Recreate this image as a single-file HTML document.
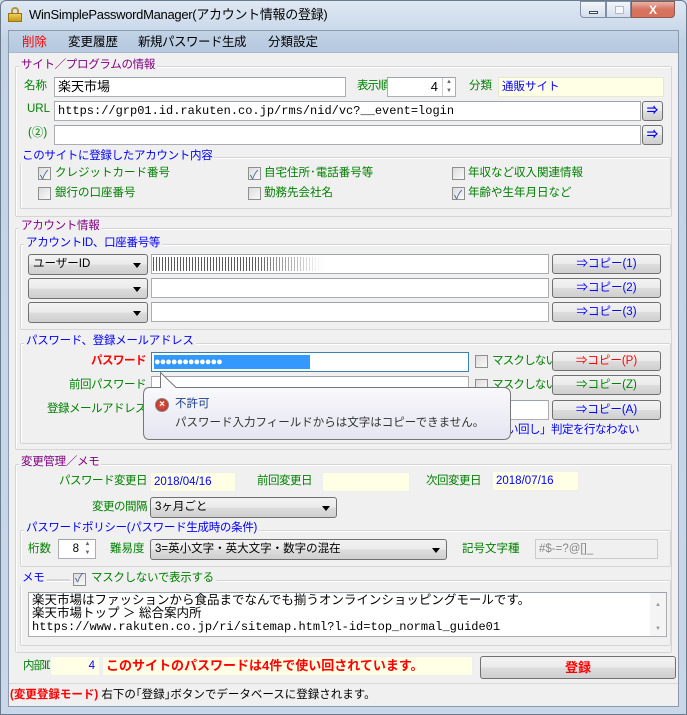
<!DOCTYPE html>
<html><head><meta charset="utf-8"><style>
*{box-sizing:border-box;margin:0;padding:0}
body{width:687px;height:715px;overflow:hidden;background:#cfdbe9;font-family:"Liberation Sans","Noto Sans CJK JP",sans-serif;font-size:11.5px;position:relative}
.a{position:absolute;white-space:nowrap;line-height:1}
.r{position:absolute;white-space:nowrap;line-height:1;right:541px;letter-spacing:-0.5px}
.frame{position:absolute;left:0;top:0;width:687px;height:715px;background:linear-gradient(#dfe8f3,#c3d3e6 40px,#c9d7e8);border:1px solid #6b7b8e;border-radius:6px 6px 0 0}
.client{position:absolute;left:8px;top:30px;width:671px;height:677px;background:#f0f0f0;border:1px solid #8a9bb0}
.menu{position:absolute;left:9px;top:31px;width:669px;height:22px;background:linear-gradient(#c3d3e6,#b5c8de);border-bottom:1px solid #a8b8cc}
.g{position:absolute;border:1px solid #d5d5d5;box-shadow:inset 1px 1px 0 #fff;border-radius:2px}
.gl{position:absolute;background:#f0f0f0;padding:0 2px;line-height:1;white-space:nowrap;letter-spacing:-0.3px}
.in{position:absolute;background:#fff;border:1px solid #abadb3;border-top-color:#9ea2ad;height:20px;line-height:18px;padding-left:3px;white-space:nowrap;overflow:hidden}
.y{background:#ffffe6}
.btn{position:absolute;border:1px solid #707070;border-radius:3px;background:linear-gradient(#f2f2f2 0,#ebebeb 50%,#dddddd 51%,#cfcfcf 100%);text-align:center;line-height:18px;height:20px;color:#0000ff}
.cmb{position:absolute;border:1px solid #707070;border-radius:3px;background:linear-gradient(#f2f2f2 0,#ebebeb 50%,#dddddd 51%,#cfcfcf 100%);height:21px;line-height:19px;padding-left:4px}
.cmb:after{content:"";position:absolute;right:6px;top:8px;border:4px solid transparent;border-top:5px solid #000;border-bottom:0}
.cb{position:absolute;width:13px;height:13px;border:1px solid #8f8f8f;background:linear-gradient(135deg,#dcdcdc,#fafafa)}
.ck:after{content:"✓";position:absolute;left:1px;top:-2px;font-size:12px;color:#4a5f97}
.gr{color:#008000}.bl{color:#0000ff}.pu{color:#800080}.rd{color:#ff0000}
</style></head><body>
<div class="frame"></div>
<div class="a" style="left:8px;top:7px;width:14px;height:15px"><div style="position:absolute;left:3px;top:0;width:8px;height:8px;border:2px solid #b8952c;border-bottom:0;border-radius:4px 4px 0 0"></div><div style="position:absolute;left:0;top:6px;width:14px;height:9px;background:linear-gradient(#f0cd57,#c99a1d);border:1px solid #9a7312"></div></div>
<div class="a" style="left:29px;top:8px;font-size:13px;color:#000;letter-spacing:-0.3px">WinSimplePasswordManager(アカウント情報の登録)</div>
<div class="a" style="left:580px;top:1px;width:26px;height:17px;border:1px solid #8090a4;border-radius:0 0 0 4px;background:linear-gradient(#f3f6fa,#d4deea)"><div style="position:absolute;left:8px;top:9px;width:9px;height:3px;background:#fff;border:1px solid #3a4a5e"></div></div>
<div class="a" style="left:606px;top:1px;width:25px;height:17px;border:1px solid #8090a4;background:linear-gradient(#f3f6fa,#d4deea)"><div style="position:absolute;left:8px;top:4px;width:9px;height:8px;border:1px solid #b0bac6;background:#f4f6fa"></div></div>
<div class="a" style="left:631px;top:1px;width:44px;height:17px;border:1px solid #8d5a52;border-radius:0 0 4px 0;background:linear-gradient(#eab3a8,#d5735f 50%,#d8705a)"><div style="position:absolute;left:0;width:42px;top:1px;text-align:center;color:#fff;font-weight:bold;font-size:12px;line-height:14px">X</div></div>
<div class="client"></div>
<div class="menu"></div>
<div class="a rd" style="left:22px;top:36px;font-size:12.5px">削除</div>
<div class="a" style="left:68px;top:36px;font-size:12.5px">変更履歴</div>
<div class="a" style="left:138px;top:36px;font-size:12.5px;letter-spacing:-0.5px">新規パスワード生成</div>
<div class="a" style="left:268px;top:36px;font-size:12.5px">分類設定</div>

<div class="g" style="left:15px;top:66px;width:657px;height:151px"></div>
<div class="gl pu" style="left:19px;top:60px">サイト／プログラムの情報</div>
<div class="a gr" style="left:24px;top:81px">名称</div>
<div class="in" style="left:54px;top:77px;width:292px;font-size:13px">楽天市場</div>
<div class="a gr" style="left:357px;top:81px;letter-spacing:-1px">表示順</div>
<div class="in" style="left:387px;top:77px;width:69px;text-align:right;padding-right:17px;font-size:13px">4</div>
<div class="a" style="left:442px;top:78px;width:13px;height:18px;border-left:1px solid #ccc;font-size:6px;color:#666;text-align:center;line-height:9px">▲<br>▼</div>
<div class="a gr" style="left:469px;top:81px">分類</div>
<div class="in y bl" style="left:498px;top:77px;width:166px;border-color:#e8e8d0">通販サイト</div>
<div class="a gr" style="left:27px;top:104px">URL</div>
<div class="in" style="left:54px;top:101px;width:587px;font-family:'Liberation Mono','Noto Sans CJK JP',monospace;font-size:12px">https://grp01.id.rakuten.co.jp/rms/nid/vc?__event=login</div>
<div class="btn" style="left:642px;top:101px;width:21px;font-weight:bold">⇒</div>
<div class="a gr" style="left:28px;top:128px">(②)</div>
<div class="in" style="left:54px;top:125px;width:587px"></div>
<div class="btn" style="left:642px;top:125px;width:21px;font-weight:bold">⇒</div>
<div class="g" style="left:20px;top:157px;width:651px;height:52px"></div>
<div class="gl bl" style="left:20px;top:151px">このサイトに登録したアカウント内容</div>
<div class="cb ck" style="left:38px;top:167px"></div><div class="a gr" style="left:55px;top:168px">クレジットカード番号</div>
<div class="cb ck" style="left:248px;top:167px"></div><div class="a gr" style="left:264px;top:168px">自宅住所･電話番号等</div>
<div class="cb" style="left:452px;top:167px"></div><div class="a gr" style="left:468px;top:168px">年収など収入関連情報</div>
<div class="cb" style="left:38px;top:187px"></div><div class="a gr" style="left:55px;top:188px">銀行の口座番号</div>
<div class="cb" style="left:248px;top:187px"></div><div class="a gr" style="left:264px;top:188px">勤務先会社名</div>
<div class="cb ck" style="left:452px;top:187px"></div><div class="a gr" style="left:468px;top:188px">年齢や生年月日など</div>

<div class="g" style="left:15px;top:228px;width:657px;height:222px"></div>
<div class="gl pu" style="left:19px;top:221px">アカウント情報</div>
<div class="g" style="left:20px;top:244px;width:651px;height:86px"></div>
<div class="gl bl" style="left:24px;top:238px">アカウントID、口座番号等</div>
<div class="cmb" style="left:28px;top:254px;width:120px">ユーザーID</div>
<div class="in" style="left:151px;top:254px;width:398px"><div style="position:absolute;left:1px;top:2px;width:170px;height:14px;background:repeating-linear-gradient(90deg,#222 0 1px,transparent 1px 3px),repeating-linear-gradient(0deg,#fff 0 1px,transparent 1px 2px);opacity:.75;-webkit-mask-image:linear-gradient(90deg,#000 60%,transparent)"></div></div>
<div class="btn" style="left:552px;top:254px;width:109px">⇒コピー(1)</div>
<div class="cmb" style="left:28px;top:278px;width:120px"></div>
<div class="in" style="left:151px;top:278px;width:398px"></div>
<div class="btn" style="left:552px;top:278px;width:109px">⇒コピー(2)</div>
<div class="cmb" style="left:28px;top:302px;width:120px"></div>
<div class="in" style="left:151px;top:302px;width:398px"></div>
<div class="btn" style="left:552px;top:302px;width:109px">⇒コピー(3)</div>
<div class="g" style="left:20px;top:343px;width:651px;height:101px"></div>
<div class="gl bl" style="left:24px;top:336px">パスワード、登録メールアドレス</div>
<div class="r rd" style="top:356px;font-weight:bold">パスワード</div>
<div class="in" style="left:151px;top:352px;width:318px;border-color:#3c7fb1"><div style="position:absolute;left:2px;top:2px;width:156px;height:14px;background:#3399ff;color:#fff;font-size:11px;letter-spacing:-1px;line-height:14px">●●●●●●●●●●●●</div></div>
<div class="cb" style="left:475px;top:355px"></div><div class="a gr" style="left:492px;top:356px;letter-spacing:-0.8px">マスクしない</div>
<div class="btn" style="left:552px;top:351px;width:109px;color:#ff0000">⇒コピー(P)</div>
<div class="r gr" style="top:380px">前回パスワード</div>
<div class="in" style="left:151px;top:376px;width:318px"></div>
<div class="cb" style="left:475px;top:379px"></div><div class="a gr" style="left:492px;top:380px;letter-spacing:-0.8px">マスクしない</div>
<div class="btn" style="left:552px;top:375px;width:109px;color:#008000">⇒コピー(Z)</div>
<div class="r gr" style="top:404px">登録メールアドレス</div>
<div class="in" style="left:151px;top:400px;width:398px"></div>
<div class="btn" style="left:552px;top:400px;width:109px">⇒コピー(A)</div>
<div class="a bl" style="left:496px;top:425px;letter-spacing:-0.5px">使い回し」判定を行なわない</div>
<svg class="a" style="left:140px;top:368px" width="376" height="76">
<defs><linearGradient id="tg" x1="0" y1="0" x2="0" y2="1"><stop offset="0" stop-color="#ffffff"/><stop offset="1" stop-color="#e4e5f0"/></linearGradient></defs>
<path d="M9.5,19.5 L20.5,19.5 L20.5,4.5 L36,19.5 L363.5,19.5 Q370.5,19.5 370.5,26.5 L370.5,64.5 Q370.5,71.5 363.5,71.5 L9.5,71.5 Q3.5,71.5 3.5,64.5 L3.5,26.5 Q3.5,19.5 9.5,19.5 Z" fill="url(#tg)" stroke="#767676"/>
</svg>
<div class="a" style="left:155px;top:398px;width:14px;height:14px;border-radius:7px;background:radial-gradient(#e85a4a,#b3261a);border:1px solid #888;color:#fff;font-size:10px;font-weight:bold;text-align:center;line-height:12px">×</div>
<div class="a" style="left:175px;top:399px;color:#1a3e8c">不許可</div>
<div class="a" style="left:175px;top:418px;color:#333">パスワード入力フィールドからは文字はコピーできません。</div>

<div class="g" style="left:15px;top:464px;width:657px;height:189px"></div>
<div class="gl pu" style="left:19px;top:457px">変更管理／メモ</div>
<div class="r gr" style="top:476px;right:540px">パスワード変更日</div>
<div class="in y bl" style="left:150px;top:472px;width:86px;border-color:#eee">2018/04/16</div>
<div class="a gr" style="left:257px;top:476px;letter-spacing:-0.5px">前回変更日</div>
<div class="in y" style="left:322px;top:472px;width:88px;border-color:#eee"></div>
<div class="a gr" style="left:426px;top:476px;letter-spacing:-0.5px">次回変更日</div>
<div class="in y bl" style="left:492px;top:471px;width:87px;border-color:#eee">2018/07/16</div>
<div class="r gr" style="top:502px;right:540px">変更の間隔</div>
<div class="cmb" style="left:150px;top:497px;width:187px">3ヶ月ごと</div>
<div class="g" style="left:20px;top:530px;width:651px;height:37px"></div>
<div class="gl bl" style="left:24px;top:523px">パスワードポリシー(パスワード生成時の条件)</div>
<div class="a gr" style="left:28px;top:544px">桁数</div>
<div class="in" style="left:58px;top:539px;width:38px;text-align:right;padding-right:16px">8</div>
<div class="a" style="left:81px;top:540px;width:13px;height:18px;font-size:6px;color:#666;text-align:center;line-height:9px">▲<br>▼</div>
<div class="a gr" style="left:110px;top:544px">難易度</div>
<div class="cmb" style="left:150px;top:539px;width:297px">3=英小文字・英大文字・数字の混在</div>
<div class="a gr" style="left:462px;top:544px">記号文字種</div>
<div class="in" style="left:535px;top:539px;width:123px;background:#f0f0f0;color:#888;border-color:#ccc">#$-=?@[]_</div>
<div class="g" style="left:20px;top:580px;width:651px;height:66px"></div>
<div class="gl bl" style="left:20px;top:573px">メモ</div>
<div class="a" style="left:47px;top:579px;width:22px;height:1px;background:#d5d5d5"></div>
<div class="gl" style="left:71px;top:573px;height:14px"><span class="cb ck" style="left:2px;top:0"></span><span class="gr" style="margin-left:18px">マスクしないで表示する</span></div>
<div class="in" style="left:28px;top:592px;width:639px;height:45px;line-height:13px;padding-top:1px;font-size:12.5px">楽天市場はファッションから食品までなんでも揃うオンラインショッピングモールです。<br>楽天市場トップ ＞ 総合案内所<br><span style="font-family:'Liberation Mono',monospace;font-size:12px">https://www.rakuten.co.jp/ri/sitemap.html?l-id=top_normal_guide01</span>
<div style="position:absolute;right:0;top:0;width:16px;height:43px;background:#f4f4f4;font-size:6px;color:#999;text-align:center;line-height:8px;padding-top:8px">▲<br><br><br>▼</div></div>

<div class="a gr" style="left:23px;top:661px;letter-spacing:-1px">内部ID</div>
<div class="in y bl" style="left:50px;top:656px;width:50px;text-align:right;padding-right:4px;border-color:#eee">4</div>
<div class="in y rd" style="left:102px;top:656px;width:371px;font-weight:bold;font-size:13px;border-color:#eee">このサイトのパスワードは4件で使い回されています。</div>
<div class="btn" style="left:480px;top:656px;width:196px;height:23px;line-height:21px;color:#ff0000;font-weight:bold;font-size:13px">登録</div>
<div class="a" style="left:9px;top:683px;width:669px;height:1px;background:#d8d8d8"></div>
<div class="a" style="left:10px;top:690px"><span class="rd" style="font-weight:bold">(変更登録モード)</span> 右下の｢登録｣ボタンでデータベースに登録されます。</div>
</body></html>
